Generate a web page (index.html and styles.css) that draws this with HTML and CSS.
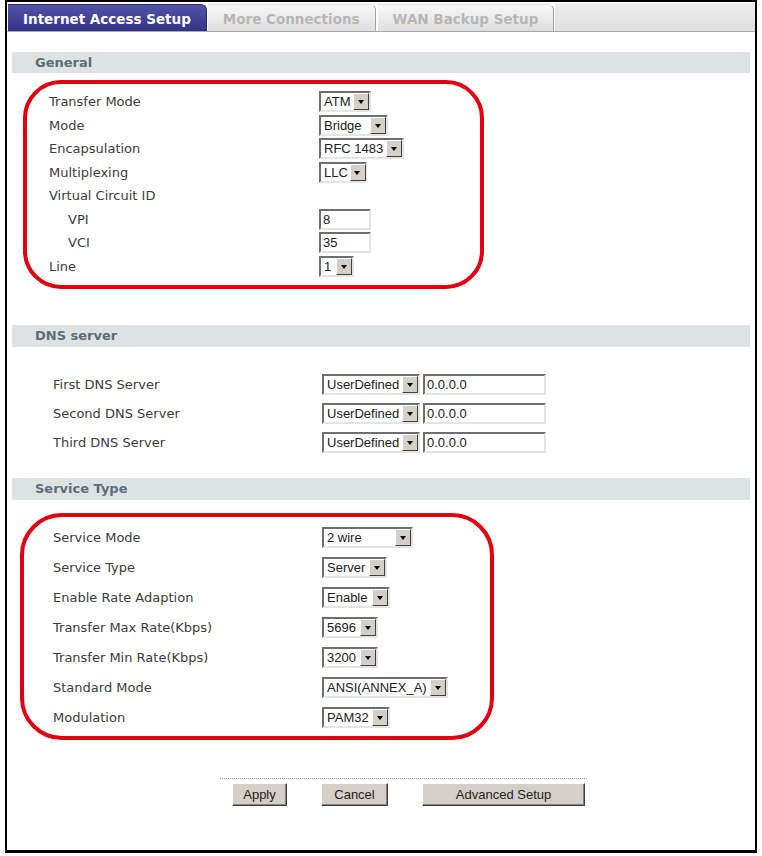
FILE: index.html
```html
<!DOCTYPE html>
<html lang="en">
<head>
    <meta charset="UTF-8">
    <title>Internet Access Setup</title>
    <link rel="stylesheet" href="styles.css">
</head>
<body>
    <div class="frame">
        <div class="tabs">
            <div class="tab active">Internet Access Setup</div>
            <div class="tab">More Connections</div>
            <div class="tab">WAN Backup Setup</div>
            <div class="tab-fill"></div>
        </div>

        <div class="section-title first">General</div>
        <div class="mark mark-general">
            <div class="row"><span class="label">Transfer Mode</span><span class="sel w52"><span class="val">ATM</span><span class="arrow"></span></span></div>
            <div class="row"><span class="label">Mode</span><span class="sel w69"><span class="val">Bridge</span><span class="arrow"></span></span></div>
            <div class="row"><span class="label">Encapsulation</span><span class="sel w85"><span class="val">RFC 1483</span><span class="arrow"></span></span></div>
            <div class="row"><span class="label">Multiplexing</span><span class="sel w48"><span class="val">LLC</span><span class="arrow"></span></span></div>
            <div class="row"><span class="label">Virtual Circuit ID</span><span></span></div>
            <div class="row"><span class="label sub">VPI</span><input class="field w52" type="text" value="8"></div>
            <div class="row"><span class="label sub">VCI</span><input class="field w52" type="text" value="35"></div>
            <div class="row"><span class="label">Line</span><span class="sel w35"><span class="val">1</span><span class="arrow"></span></span></div>
        </div>

        <div class="section-title dns">DNS server</div>
        <div class="dns-rows">
            <div class="row"><span class="label">First DNS Server</span><span class="pair"><span class="sel w98"><span class="val">UserDefined</span><span class="arrow"></span></span><input class="field w123" type="text" value="0.0.0.0"></span></div>
            <div class="row"><span class="label">Second DNS Server</span><span class="pair"><span class="sel w98"><span class="val">UserDefined</span><span class="arrow"></span></span><input class="field w123" type="text" value="0.0.0.0"></span></div>
            <div class="row"><span class="label">Third DNS Server</span><span class="pair"><span class="sel w98"><span class="val">UserDefined</span><span class="arrow"></span></span><input class="field w123" type="text" value="0.0.0.0"></span></div>
        </div>

        <div class="section-title service">Service Type</div>
        <div class="mark mark-service">
            <div class="row"><span class="label">Service Mode</span><span class="sel w91"><span class="val">2 wire</span><span class="arrow"></span></span></div>
            <div class="row"><span class="label">Service Type</span><span class="sel w65"><span class="val">Server</span><span class="arrow"></span></span></div>
            <div class="row"><span class="label">Enable Rate Adaption</span><span class="sel w68"><span class="val">Enable</span><span class="arrow"></span></span></div>
            <div class="row"><span class="label">Transfer Max Rate(Kbps)</span><span class="sel w56"><span class="val">5696</span><span class="arrow"></span></span></div>
            <div class="row"><span class="label">Transfer Min Rate(Kbps)</span><span class="sel w56"><span class="val">3200</span><span class="arrow"></span></span></div>
            <div class="row"><span class="label">Standard Mode</span><span class="sel w126"><span class="val">ANSI(ANNEX_A)</span><span class="arrow"></span></span></div>
            <div class="row"><span class="label">Modulation</span><span class="sel w68"><span class="val">PAM32</span><span class="arrow"></span></span></div>
        </div>

        <div class="actions">
            <button class="btn w55">Apply</button>
            <button class="btn w67">Cancel</button>
            <button class="btn w163">Advanced Setup</button>
        </div>
    </div>
</body>
</html>
```

FILE: styles.css
```css
body {
    margin: 0;
    background: #fff;
    font-family: 'DejaVu Sans', Verdana, sans-serif;
    color: #3c3c3c;
}
.frame {
    margin-left: 5px;
    width: 748px;
    height: 848px;
    border: 2px solid #000;
    border-bottom-width: 3px;
    background: #fff;
}

/* tabs */
.tabs {
    display: flex;
    height: 27px;
    padding-top: 2px;
    border-bottom: 1px solid #a9a9a9;
    align-items: stretch;
}
.tab {
    padding: 0 15px;
    margin-right: 2px;
    font-size: 13.5px;
    font-weight: bold;
    line-height: 28px;
    color: #b6b6b6;
    background: linear-gradient(#f8f8f8, #dedede);
    border-right: 1px solid #a6a6a6;
    border-top: 1px solid #e0e0e0;
    border-radius: 0 6px 0 0;
    white-space: nowrap;
}
.tab.active {
    color: #fff;
    background: linear-gradient(#5252a6, #333388);
    border-color: #2b2b78;
    margin-left: 1px;
    margin-right: 1px;
}
.tab-fill {
    flex: 1;
    margin-left: -1px;
    background: linear-gradient(#ededed, #dedede);
    border-top: 1px solid #e6e6e6;
}

/* section headers */
.section-title {
    margin: 0 5px;
    height: 22px;
    padding-left: 23px;
    background: #dde3e3;
    color: #5e6c79;
    font-size: 13px;
    font-weight: bold;
    line-height: 22px;
}
.section-title.first {
    margin-top: 20px;
    height: 21px;
    line-height: 21px;
}
.section-title.dns {
    margin-top: 36px;
}
.section-title.service {
    margin-top: 21px;
}

/* rows */
.row {
    display: grid;
    align-items: center;
    font-size: 13px;
}
.label {
    white-space: nowrap;
}
.label.sub {
    padding-left: 19px;
}

/* red annotation outlines */
.mark {
    box-sizing: border-box;
    border: 4px solid #e3000f;
    border-radius: 38px;
}
.mark-general {
    margin: 7px 0 0 16px;
    width: 461px;
    padding: 6px 0 7px 22px;
}
.mark-general .row {
    height: 23.5px;
    grid-template-columns: 270px auto;
}
.mark-service {
    margin: 13px 0 0 13px;
    width: 474px;
    padding: 5px 0 4px 29px;
    border-radius: 42px;
}
.mark-service .row {
    height: 30px;
    grid-template-columns: 269px auto;
}
.dns-rows {
    padding: 23px 0 0 46px;
}
.dns-rows .row {
    height: 29px;
    grid-template-columns: 269px auto;
}
.pair {
    display: flex;
    gap: 3px;
}

/* fake select boxes */
.sel {
    display: inline-flex;
    box-sizing: border-box;
    height: 21px;
    border: 2px solid;
    border-color: #6e6e6e #e4e4e4 #e4e4e4 #6e6e6e;
    background: #fff;
    font-family: 'Liberation Sans', Arial, sans-serif;
    font-size: 13px;
    color: #222;
}
.sel .val {
    flex: 1;
    padding: 0 2px 0 3px;
    line-height: 17px;
    white-space: nowrap;
}
.sel .arrow {
    position: relative;
    flex: none;
    width: 16px;
    box-sizing: border-box;
    background: #d4d0c8;
    border: 1px solid;
    border-color: #fff #404040 #404040 #fff;
}
.sel .arrow::after {
    content: "";
    position: absolute;
    left: 3.5px;
    top: 6px;
    border-top: 4px solid #000;
    border-left: 3.5px solid transparent;
    border-right: 3.5px solid transparent;
}
.field {
    box-sizing: border-box;
    height: 21px;
    margin: 0;
    padding: 0 2px;
    border: 2px solid;
    border-color: #6e6e6e #e4e4e4 #e4e4e4 #6e6e6e;
    font-family: 'Liberation Sans', Arial, sans-serif;
    font-size: 13px;
    color: #222;
    outline: none;
}

.w35 { width: 35px; }
.w48 { width: 48px; }
.w52 { width: 52px; }
.w56 { width: 56px; }
.w65 { width: 65px; }
.w68 { width: 68px; }
.w69 { width: 69px; }
.w85 { width: 85px; }
.w91 { width: 91px; }
.w98 { width: 98px; }
.w123 { width: 123px; }
.w126 { width: 126px; }

/* buttons */
.actions {
    display: flex;
    gap: 34px;
    margin: 38px 0 0 213px;
    width: 367px;
    box-sizing: border-box;
    padding: 4px 0 0 12px;
    border-top: 1px dotted #a0a0a0;
}
.btn {
    height: 23px;
    padding: 0;
    background: #d4d0c8;
    border: 1px solid;
    border-color: #fff #404040 #404040 #fff;
    box-shadow: inset -1px -1px #808080;
    font-family: 'Liberation Sans', Arial, sans-serif;
    font-size: 13px;
    color: #222;
}
.w55 { width: 55px; }
.w67 { width: 67px; }
.w163 { width: 163px; }
```
